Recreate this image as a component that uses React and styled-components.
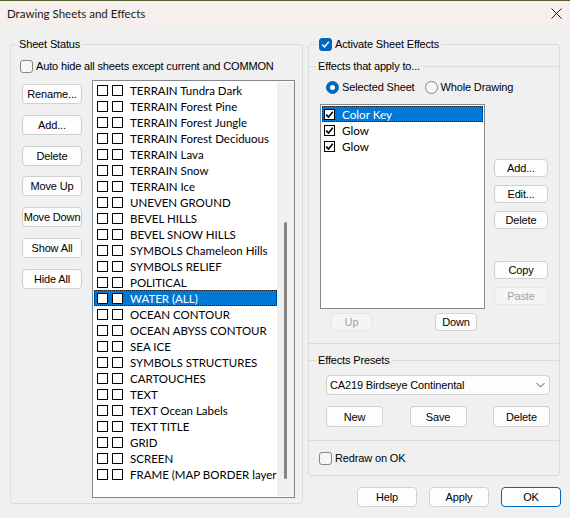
import React from "react";
import styled, { createGlobalStyle } from "styled-components";

const LIST_FONT = `Lato, "Liberation Sans", sans-serif`;
const OLD_FONT = `"Liberation Sans", Arial, sans-serif`;

const GlobalStyle = createGlobalStyle`
  html, body {
    margin: 0;
    padding: 0;
    background: #f0f0f0;
  }
  body {
    font-family: ${OLD_FONT};
    font-size: 11px;
    letter-spacing: -0.15px;
    color: #000;
  }
  * {
    box-sizing: border-box;
  }
`;

const Window = styled.div`
  width: 570px;
  height: 518px;
  display: flex;
  flex-direction: column;
  background: #f0f0f0;
  border-top: 1px solid #56602f;
  overflow: hidden;
`;

const TitleBar = styled.div`
  height: 25px;
  flex: none;
  display: flex;
  align-items: center;
  justify-content: space-between;
  padding: 0 8px 0 7px;
  background: #f7efeb;
`;

const Title = styled.span`
  font-family: ${LIST_FONT};
  font-size: 11.5px;
  letter-spacing: 0;
  color: #1a1a1a;
`;

const Body = styled.div`
  flex: 1;
  display: flex;
  align-items: flex-start;
  gap: 5px;
  padding: 18px 0 0 10px;
`;

const Group = styled.div`
  position: relative;
  width: ${(p) => p.$w}px;
  border: 1px solid #dcdcdc;
  border-radius: 3px;
  padding: ${(p) => p.$pad || "0"};
`;

const Legend = styled.div`
  position: absolute;
  top: -9px;
  left: ${(p) => p.$left}px;
  display: flex;
  align-items: center;
  gap: 3px;
  padding: 0 2px;
  line-height: 16px;
  background: #f0f0f0;
  white-space: nowrap;
`;

const Section = styled.div`
  position: relative;
  margin-top: ${(p) => p.$mt}px;
  padding: ${(p) => p.$pad};
  border-top: 1px solid #dcdcdc;
  border-bottom: 1px solid #dcdcdc;
`;

const CheckRow = styled.div`
  display: flex;
  align-items: center;
  gap: 3px;
  height: 14px;
  margin: ${(p) => p.$margin || "0"};
  white-space: nowrap;
`;

const WinCheck = styled.span`
  width: 13px;
  height: 13px;
  flex: none;
  display: flex;
  align-items: center;
  justify-content: center;
  border-radius: 3px;
  border: 1px solid ${(p) => (p.$checked ? "#0067c0" : "#858585")};
  background: ${(p) => (p.$checked ? "#0067c0" : "#f7f7f7")};
`;

const RadioDot = styled.span`
  width: 13px;
  height: 13px;
  flex: none;
  display: flex;
  align-items: center;
  justify-content: center;
  border-radius: 50%;
  border: 1px solid ${(p) => (p.$on ? "#0067c0" : "#858585")};
  background: ${(p) => (p.$on ? "#0067c0" : "#f7f7f7")};

  &::after {
    content: "";
    display: ${(p) => (p.$on ? "block" : "none")};
    width: 5px;
    height: 5px;
    border-radius: 50%;
    background: #fff;
  }
`;

const RadioRow = styled.div`
  display: flex;
  align-items: center;
  gap: 10px;
  height: 14px;
  padding-left: 17px;
`;

const BoxCheck = styled.span`
  width: 11px;
  height: 11px;
  flex: none;
  display: flex;
  align-items: center;
  justify-content: center;
  border: 1px solid #000;
  background: #fff;
`;

const Button = styled.button`
  width: ${(p) => p.$w}px;
  height: ${(p) => p.$h || 20}px;
  flex: none;
  margin-top: ${(p) => p.$mt || 0}px;
  padding: 0;
  font-family: ${OLD_FONT};
  font-size: 11px;
  letter-spacing: -0.15px;
  color: ${(p) => (p.disabled ? "#a3a3a3" : "#000")};
  background: ${(p) => (p.disabled ? "#f5f5f5" : "#fdfdfd")};
  border: 1px solid
    ${(p) => (p.$default ? "#0067c0" : p.disabled ? "#e6e6e6" : "#d0d0d0")};
  border-radius: 4px;
  white-space: nowrap;
`;

/* left side */

const SheetArea = styled.div`
  display: flex;
  margin-top: 7px;
`;

const ButtonCol = styled.div`
  display: flex;
  flex-direction: column;
  gap: 10.8px;
  width: 60px;
  margin: 0 10px 0 2px;
  padding-top: 4px;
`;

const SheetList = styled.div`
  width: 203px;
  height: 418px;
  display: flex;
  border: 1px solid #828790;
  background: #fff;
`;

const Rows = styled.div`
  flex: 1;
  min-width: 0;
  padding: 1px 0 0 1px;
  overflow: hidden;
  font-family: ${LIST_FONT};
  font-size: 11.5px;
  letter-spacing: 0;
`;

const SheetRow = styled.div`
  height: 16px;
  display: flex;
  align-items: center;
  padding-left: 3px;
  white-space: nowrap;
  overflow: hidden;
  color: ${(p) => (p.$selected ? "#fff" : "#000")};
  background: ${(p) => (p.$selected ? "#0078d7" : "transparent")};
  outline: ${(p) => (p.$selected ? "1px dotted #1a1a1a" : "none")};
  outline-offset: -1px;
`;

const SheetName = styled.span`
  margin-left: 7px;
`;

const Boxes = styled.span`
  display: flex;
  gap: 4px;
`;

const ScrollTrack = styled.div`
  width: 17px;
  flex: none;
  margin: 1px 0;
  padding-left: 7px;
  background: #f0f0f0;
`;

const Thumb = styled.div`
  width: 3px;
  height: 257px;
  margin-top: 140px;
  border-radius: 2px;
  background: #858585;
`;

/* right side */

const RightCol = styled.div`
  display: flex;
  flex-direction: column;
  width: 252px;
`;

const EffectsArea = styled.div`
  display: flex;
  margin-top: 10px;
  padding-left: 11px;
`;

const EffectsCol = styled.div`
  display: flex;
  flex-direction: column;
`;

const EffectsList = styled.div`
  width: 165px;
  height: 205px;
  padding: 1px 0 0 1px;
  border: 1px solid #828790;
  background: #fff;
  font-family: ${LIST_FONT};
  font-size: 11.7px;
  letter-spacing: 0;
`;

const EffectRow = styled.div`
  width: 161px;
  height: 16px;
  display: flex;
  align-items: center;
  gap: 7px;
  padding-left: 2px;
  color: ${(p) => (p.$selected ? "#fff" : "#000")};
  background: ${(p) => (p.$selected ? "#0078d7" : "transparent")};
  outline: ${(p) => (p.$selected ? "1px dotted #1a1a1a" : "none")};
  outline-offset: -1px;
`;

const UpDownRow = styled.div`
  display: flex;
  justify-content: space-between;
  margin-top: 4px;
  padding: 0 8px 0 11px;
`;

const SideButtons = styled.div`
  display: flex;
  flex-direction: column;
  gap: 8px;
  margin-left: 9px;
  padding-top: 55px;
`;

const Dropdown = styled.div`
  height: 20px;
  display: flex;
  align-items: center;
  justify-content: space-between;
  padding: 0 4px 0 3px;
  border: 1px solid #d0d0d0;
  border-radius: 4px;
  background: #fdfdfd;
`;

const PresetButtons = styled.div`
  display: flex;
  justify-content: space-between;
  margin-top: 11px;
`;

const Footer = styled.div`
  display: flex;
  justify-content: flex-end;
  gap: 12px;
  margin: 11px -1px 0 0;
`;

const sheets = [
  "TERRAIN Tundra Dark",
  "TERRAIN Forest Pine",
  "TERRAIN Forest Jungle",
  "TERRAIN Forest Deciduous",
  "TERRAIN Lava",
  "TERRAIN Snow",
  "TERRAIN Ice",
  "UNEVEN GROUND",
  "BEVEL HILLS",
  "BEVEL SNOW HILLS",
  "SYMBOLS Chameleon Hills",
  "SYMBOLS RELIEF",
  "POLITICAL",
  "WATER (ALL)",
  "OCEAN CONTOUR",
  "OCEAN ABYSS CONTOUR",
  "SEA ICE",
  "SYMBOLS STRUCTURES",
  "CARTOUCHES",
  "TEXT",
  "TEXT Ocean Labels",
  "TEXT TITLE",
  "GRID",
  "SCREEN",
  "FRAME (MAP BORDER layer",
];

const effects = ["Color Key", "Glow", "Glow"];

function Tick({ color = "#fff", size = 9, width = 1.4 }) {
  return (
    <svg width={size} height={size} viewBox="0 0 9 9">
      <polyline
        points="1.2,4.6 3.5,7 7.8,1.8"
        fill="none"
        stroke={color}
        strokeWidth={width}
      />
    </svg>
  );
}

function CloseIcon() {
  return (
    <svg width="11" height="11" viewBox="0 0 11 11">
      <path d="M0.5 0.5 L10.5 10.5 M10.5 0.5 L0.5 10.5" stroke="#1a1a1a" strokeWidth="1" />
    </svg>
  );
}

function Chevron() {
  return (
    <svg width="9" height="6" viewBox="0 0 9 6">
      <polyline points="0.5,1 4.5,5 8.5,1" fill="none" stroke="#555" strokeWidth="1" />
    </svg>
  );
}

export default function App() {
  return (
    <Window>
      <GlobalStyle />
      <TitleBar>
        <Title>Drawing Sheets and Effects</Title>
        <CloseIcon />
      </TitleBar>
      <Body>
        <Group $w={293} $pad="14px 7px 5px 9px">
          <Legend $left={6}>Sheet Status</Legend>
          <CheckRow>
            <WinCheck />
            Auto hide all sheets except current and COMMON
          </CheckRow>
          <SheetArea>
            <ButtonCol>
              <Button $w={60}>Rename...</Button>
              <Button $w={60}>Add...</Button>
              <Button $w={60}>Delete</Button>
              <Button $w={60}>Move Up</Button>
              <Button $w={60}>Move Down</Button>
              <Button $w={60}>Show All</Button>
              <Button $w={60}>Hide All</Button>
            </ButtonCol>
            <SheetList>
              <Rows>
                {sheets.map((name) => (
                  <SheetRow key={name} $selected={name === "WATER (ALL)"}>
                    <Boxes>
                      <BoxCheck />
                      <BoxCheck />
                    </Boxes>
                    <SheetName>{name}</SheetName>
                  </SheetRow>
                ))}
              </Rows>
              <ScrollTrack>
                <Thumb />
              </ScrollTrack>
            </SheetList>
          </SheetArea>
        </Group>

        <RightCol>
          <Group $w={252} $pad="21px 0 10px 0">
            <Legend $left={8}>
              <WinCheck $checked>
                <Tick />
              </WinCheck>
              Activate Sheet Effects
            </Legend>

            <Section $mt={0} $pad="13px 0 12px 0">
              <Legend $left={7}>Effects that apply to...</Legend>
              <RadioRow>
                <CheckRow>
                  <RadioDot $on />
                  Selected Sheet
                </CheckRow>
                <CheckRow>
                  <RadioDot />
                  Whole Drawing
                </CheckRow>
              </RadioRow>
              <EffectsArea>
                <EffectsCol>
                  <EffectsList>
                    {effects.map((name, i) => (
                      <EffectRow key={i} $selected={i === 0}>
                        <BoxCheck>
                          <Tick color="#000" size={9} width={1.6} />
                        </BoxCheck>
                        {name}
                      </EffectRow>
                    ))}
                  </EffectsList>
                  <UpDownRow>
                    <Button $w={41} $h={18} disabled>
                      Up
                    </Button>
                    <Button $w={42} $h={18}>
                      Down
                    </Button>
                  </UpDownRow>
                </EffectsCol>
                <SideButtons>
                  <Button $w={54} $h={18}>Add...</Button>
                  <Button $w={54} $h={18}>Edit...</Button>
                  <Button $w={54} $h={18}>Delete</Button>
                  <Button $w={54} $h={18} $mt={24}>
                    Copy
                  </Button>
                  <Button $w={54} $h={18} disabled>
                    Paste
                  </Button>
                </SideButtons>
              </EffectsArea>
            </Section>

            <Section $mt={16} $pad="14px 9px 13px 17px">
              <Legend $left={7}>Effects Presets</Legend>
              <Dropdown>
                <span>CA219 Birdseye Continental</span>
                <Chevron />
              </Dropdown>
              <PresetButtons>
                <Button $w={57} $h={21}>New</Button>
                <Button $w={57} $h={21}>Save</Button>
                <Button $w={57} $h={21}>Delete</Button>
              </PresetButtons>
            </Section>

            <CheckRow $margin="10px 0 0 10px">
              <WinCheck />
              Redraw on OK
            </CheckRow>
          </Group>

          <Footer>
            <Button $w={60}>Help</Button>
            <Button $w={60}>Apply</Button>
            <Button $w={60} $default>
              OK
            </Button>
          </Footer>
        </RightCol>
      </Body>
    </Window>
  );
}
